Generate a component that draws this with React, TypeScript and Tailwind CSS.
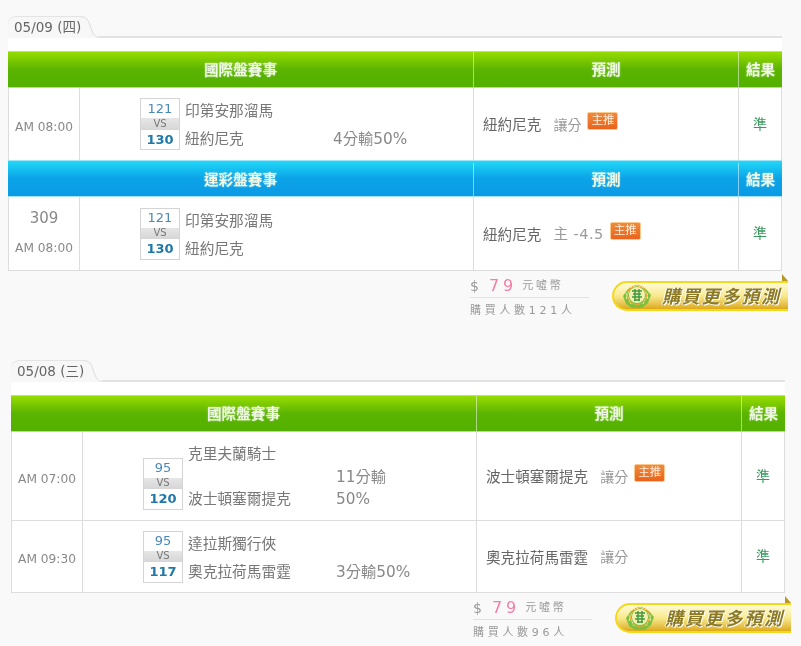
import React from "react";

const font = { fontFamily: '"DejaVu Sans", "Noto Sans CJK TC", sans-serif' };

function Tab({ label }: { label: string }) {
  return (
    <div className="flex h-[22px] items-end">
      <div className="relative flex h-[22px] w-[72px] items-center whitespace-nowrap rounded-tl-[8px] border-t border-[#e4e4e4] bg-[#f7f7f7] pl-[6px] text-[13.5px] leading-none text-[#666]">
        {label}
      </div>
      <svg width="20" height="22" viewBox="0 0 20 22" className="-ml-px shrink-0">
        <path d="M0 .5 C8 .5 9 4 11 9 C13 16 15 21 20 21.5 L0 21.5 Z" fill="#f7f7f7" />
        <path d="M0 .5 C8 .5 9 4 11 9 C13 16 15 21 20 21.5" fill="none" stroke="#dcdcdc" />
      </svg>
      <div className="h-[2px] flex-1 bg-[#e2e2e2]" />
    </div>
  );
}

function Head({ title, blue }: { title: string; blue?: boolean }) {
  const bg = blue
    ? "bg-gradient-to-b from-[#22d8f6] via-[#0ca3e8] to-[#0a9ae4] border-[#9fe6fa] pt-[2px]"
    : "bg-gradient-to-b from-[#96dc00] via-[#5ab400] to-[#54b000] border-[#b4e86c]";
  const cell =
    "flex items-center justify-center text-[14.6px] font-bold text-[#eef8e4] [text-shadow:0_0_2px_rgba(255,255,255,0.5)]";
  return (
    <div className={`grid h-[37px] grid-cols-[71px_394px_265px_44px] border-y ${bg}`}>
      <div className={`${cell} col-span-2`}>{title}</div>
      <div className={`${cell} border-l border-white/50`}>預測</div>
      <div className={`${cell} border-l border-white/50`}>結果</div>
    </div>
  );
}

function ScoreBox({ a, b }: { a: string; b: string }) {
  return (
    <div className="flex h-[52px] w-[40px] shrink-0 flex-col border border-[#d4d4d4] bg-white text-center">
      <div className="flex h-[19px] items-center justify-center text-[13px] text-[#4a8ab8]">{a}</div>
      <div className="flex h-[12px] items-center justify-center bg-gradient-to-b from-[#e6e6e6] to-[#d6d6d6] text-[10px] leading-none text-[#777]">
        VS
      </div>
      <div className="flex flex-1 items-center justify-center text-[13px] font-bold text-[#1f78a8]">{b}</div>
    </div>
  );
}

function Badge() {
  return (
    <span className="relative -top-[4px] ml-[6px] inline-flex h-[18px] w-[31px] items-center justify-center rounded-[2px] border border-[#fbc98e] bg-gradient-to-b from-[#f08a3c] to-[#e8641a] text-[11.5px] leading-none text-[#fdeedd]">
      主推
    </span>
  );
}

type RowData = {
  h: string;
  no?: string;
  time: string;
  a: string;
  b: string;
  teamA: string;
  teamB: string;
  gap: string;
  note: string[];
  pick: string;
  line: string;
  lineClass?: string;
  badge?: boolean;
};

function Row({ r, last }: { r: RowData; last?: boolean }) {
  return (
    <div className={`grid grid-cols-[71px_394px_265px_44px] bg-white text-[#777] ${r.h} ${last ? "border-b border-[#ddd]" : ""}`}>
      <div className={`flex flex-col items-center justify-center border-l border-[#ddd] text-[12.2px] text-[#888] ${r.no ? "" : "pt-[6px]"}`}>
        {r.no && <div className="mb-[12px] text-[15px] leading-[18px] text-[#888]">{r.no}</div>}
        <div>{r.time}</div>
      </div>
      <div className="flex items-center border-l border-[#ddd] pl-[60px]">
        <div className="flex items-end">
          <ScoreBox a={r.a} b={r.b} />
          <div className={`ml-[5px] flex w-[148px] flex-col whitespace-nowrap text-[14.7px] leading-[22px] ${r.gap}`}>
            <div>{r.teamA}</div>
            <div>{r.teamB}</div>
          </div>
          <div className="whitespace-nowrap text-[15.3px] leading-[22px] text-[#888]">
            {r.note.map((n) => (
              <div key={n}>{n}</div>
            ))}
          </div>
        </div>
      </div>
      <div className="flex items-center whitespace-nowrap border-l border-[#ddd] pl-[9px] pt-[2px] text-[14.6px]">
        <span className="text-[#666]">{r.pick}</span>
        <span className={`ml-[12px] text-[#999] ${r.lineClass ?? "text-[14px]"}`}>{r.line}</span>
        {r.badge && <Badge />}
      </div>
      <div className="flex items-center justify-center border-x border-[#ddd] text-[14px] text-[#3a9a60]">準</div>
    </div>
  );
}

function BuyButton() {
  return (
    <div className="relative h-[32px] w-[176px]">
      <div className="absolute inset-x-0 bottom-0 flex h-[30px] items-center rounded-l-[15px] border-2 border-r-0 border-[#f4d81e] bg-gradient-to-b from-[#fffbd8] via-[#f8e98a] to-[#dcaa08] pl-[8px]">
        <svg width="30" height="26" viewBox="0 0 30 26" className="shrink-0">
          <path d="M15 3 L24 6 L29 12 L26 20 L20 25 L10 25 L4 21 L1 13 L6 6 Z" fill="#7cc040" />
          <path d="M4 10 L9 21 M26 10 L21 21 M7 7 L4 16 M23 7 L26 16" stroke="#e4f0b0" strokeWidth="1" />
          <circle cx="15" cy="12" r="9.5" fill="none" stroke="#ecaa30" strokeWidth="1.5" strokeDasharray="2 1" />
          <circle cx="15" cy="12" r="8" fill="#f6eeb0" />
          <path d="M10 8h10M11 11h8M10 14h10M12 17h6M13 6v12M17 6v12" stroke="#3f9a3c" strokeWidth="1.4" />
        </svg>
        <span className="ml-[10px] whitespace-nowrap text-[18px] font-bold italic tracking-[1.8px] text-[#8c7a24] [text-shadow:1px_1px_0_#fff,-1px_0_0_#fff]">
          購買更多預測
        </span>
      </div>
      <svg width="6" height="7" viewBox="0 0 6 7" className="absolute -top-[5px] right-0">
        <path d="M0 0 L6 7 L0 7 Z" fill="#b89a20" />
      </svg>
    </div>
  );
}

function Footer({ buyers }: { buyers: string }) {
  return (
    <div className="mt-[6px] flex">
      <div className="ml-[462px] w-[119px] shrink-0">
        <div className="flex h-[21px] items-center border-b border-[#e2e2e2] pb-[2px] text-[#999]">
          <span className="text-[14px]">$</span>
          <span className="ml-[10px] text-[16px] tracking-[4px] text-[#f47fa4]">79</span>
          <span className="ml-[5px] whitespace-nowrap text-[11px] tracking-[2.7px]">元噓幣</span>
        </div>
        <div className="mt-[5px] whitespace-nowrap text-[11px] leading-[16px] tracking-[3.7px] text-[#999]">購買人數{buyers}人</div>
      </div>
      <div className="ml-[23px] mt-[2px] shrink-0">
        <BuyButton />
      </div>
    </div>
  );
}

export default function App() {
  return (
    <div className="h-[646px] w-[801px] overflow-hidden bg-[#f9f9f9] pt-[16px] blur-[0.5px]" style={font}>
      <section className="ml-2 w-[774px]">
        <Tab label="05/09 (四)" />
        <div className="h-[13px] bg-white" />
        <Head title="國際盤賽事" />
        <Row
          r={{ h: "h-[72px]", time: "AM 08:00", a: "121", b: "130", teamA: "印第安那溜馬", teamB: "紐約尼克", gap: "gap-[6px]", note: ["4分輸50%"], pick: "紐約尼克", line: "讓分", badge: true }}
        />
        <Head title="運彩盤賽事" blue />
        <Row
          last
          r={{ h: "h-[74px]", no: "309", time: "AM 08:00", a: "121", b: "130", teamA: "印第安那溜馬", teamB: "紐約尼克", gap: "gap-[6px]", note: [], pick: "紐約尼克", line: "主 -4.5", lineClass: "text-[14.5px] tracking-[0.5px]", badge: true }}
        />
        <Footer buyers="121" />
      </section>
      <section className="ml-[11px] mt-[41px] w-[774px]">
        <Tab label="05/08 (三)" />
        <div className="h-[13px] bg-white" />
        <Head title="國際盤賽事" />
        <Row
          r={{ h: "h-[89px] border-b border-[#ddd]", time: "AM 07:00", a: "95", b: "120", teamA: "克里夫蘭騎士", teamB: "波士頓塞爾提克", gap: "gap-[23px]", note: ["11分輸", "50%"], pick: "波士頓塞爾提克", line: "讓分", badge: true }}
        />
        <Row
          last
          r={{ h: "h-[72px]", time: "AM 09:30", a: "95", b: "117", teamA: "達拉斯獨行俠", teamB: "奧克拉荷馬雷霆", gap: "gap-[6px]", note: ["3分輸50%"], pick: "奧克拉荷馬雷霆", line: "讓分" }}
        />
        <Footer buyers="96" />
      </section>
    </div>
  );
}
